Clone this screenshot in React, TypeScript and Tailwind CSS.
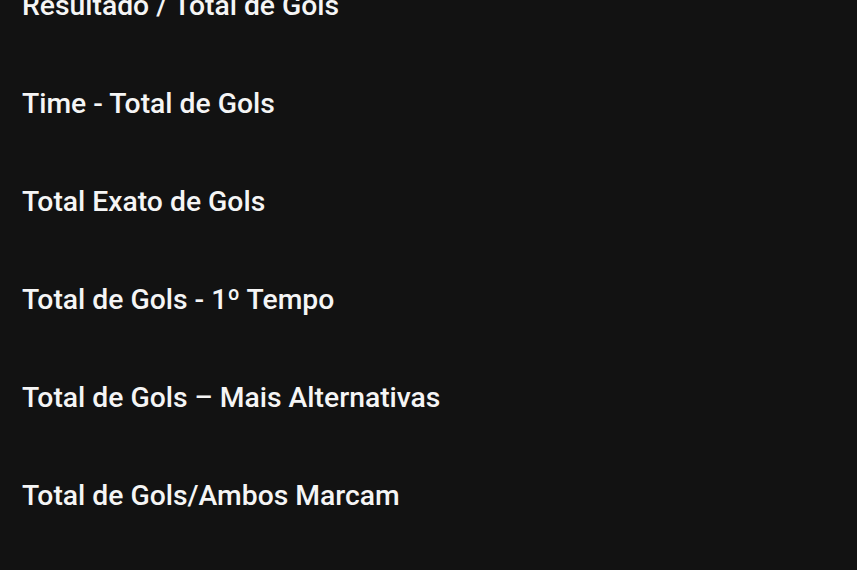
import React from 'react';

const markets = [
  'Resultado / Total de Gols',
  'Time - Total de Gols',
  'Total Exato de Gols',
  'Total de Gols - 1º Tempo',
  'Total de Gols – Mais Alternativas',
  'Total de Gols/Ambos Marcam',
];

export default function App() {
  return (
    <div className="w-[857px] h-[570px] overflow-hidden bg-[#121212] font-['Roboto',sans-serif]">
      <ul className="-mt-[43px]">
        {markets.map((m) => (
          <li key={m} className="h-[98px] flex items-center px-[22px]">
            <span className="text-[28.3px] font-medium text-[#f5f5f5]">{m}</span>
          </li>
        ))}
      </ul>
    </div>
  );
}
